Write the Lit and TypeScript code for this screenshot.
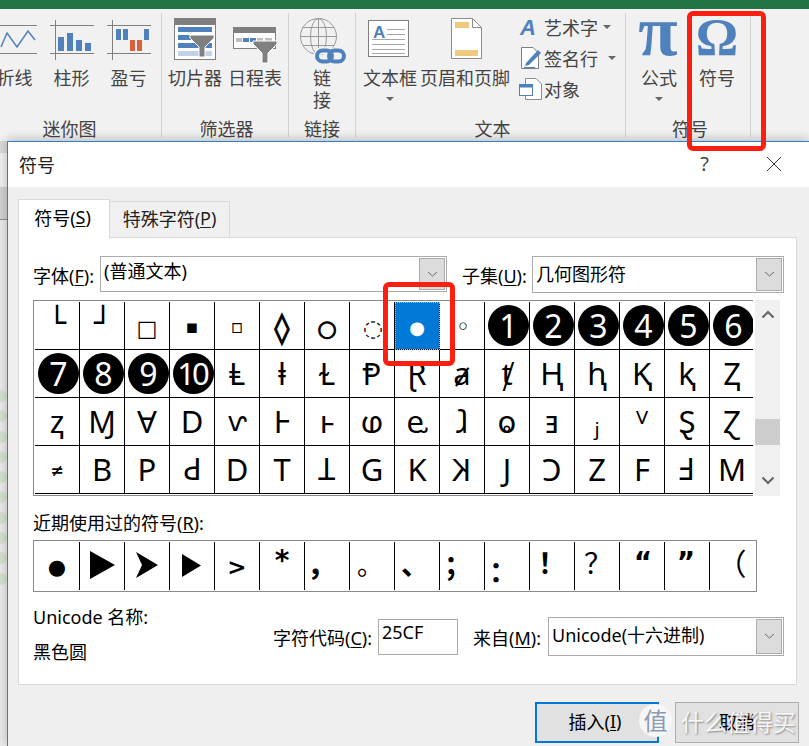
import { LitElement, html, css, svg } from "lit";
import { customElement } from "lit/decorators.js";

type G = { c: string; s?: number; x?: number; y?: number; r?: string; f?: string; w?: number; k?: number; p?: string; pw?: number; ph?: number };
const n = (c: string): G => ({ c, f: "num" });

const ROWS: G[][] = [
  [
    { c: "└", s: 30, x: 0, y: -3 }, { c: "┘", s: 30, x: 1, y: -3 }, { c: "□", s: 22, x: 0, y: 3 },
    { c: "▪", s: 19, x: 0, y: 1 }, { c: "▫", s: 19, x: 0, y: 1 }, { c: "◊", s: 30, x: 0, y: 2, k: 1.2 },
    { c: "○", s: 22, x: 0, y: 3, k: 1 }, { c: "◌", s: 23, x: 1, y: 3 }, { c: "●", s: 18, x: 0, y: 2, r: "white" },
    { c: "◦", s: 24, x: 1, y: 1 }, n("1"), n("2"), n("3"), n("4"), n("5"), n("6"),
  ],
  [
    n("7"), n("8"), n("9"), n("10"), { c: "Ⱡ" }, { c: "ⱡ" }, { c: "Ɫ" }, { c: "Ᵽ" }, { c: "Ɽ" }, { c: "ⱥ" },
    { c: "ⱦ" }, { c: "Ⱨ" }, { c: "ⱨ" }, { c: "Ⱪ" }, { c: "ⱪ" }, { c: "Ⱬ" },
  ],
  [
    { c: "ⱬ" }, { c: "Ɱ" }, { c: "Ɐ" }, { c: "D" }, { c: "ⱱ", s: 26 }, { c: "Ⱶ" }, { c: "ⱶ" }, { c: "ⱷ" },
    { c: "ⱸ" }, { c: "ⱹ" }, { c: "ⱺ" }, { c: "ⱻ" }, { c: "ⱼ" }, { c: "ⱽ" }, { c: "Ȿ" }, { c: "Ɀ" },
  ],
  [
    { c: "≠", s: 16, y: 1, w: 700 }, { c: "B" }, { c: "P" }, { c: "P", r: "rot" }, { c: "D" }, { c: "T" }, { c: "T", r: "rot" }, { c: "G" },
    { c: "K" }, { c: "K", r: "flip" }, { c: "J" }, { c: "C", r: "flip" }, { c: "Z" }, { c: "F" }, { c: "F", r: "rot" }, { c: "M" },
  ],
];

const RECENT: G[] = [
  { c: "●", s: 21, x: 0, y: 1 },
  { c: "▶", p: "M0 0L25 14L0 28Z", pw: 25, ph: 28, y: -1 },
  { c: "➤", p: "M0 0L22 13L0 26L6 13Z", pw: 22, ph: 26, y: -1 },
  { c: "▶", p: "M0 0L19 11.500L0 23Z", pw: 19, ph: 23, x: -1, y: -1 },
  { c: ">", s: 23, x: 0, y: 1, w: 700 }, { c: "*", s: 28, x: 0, y: -5, w: 700 }, { c: "，", s: 30, x: -5, y: -1, w: 700 }, { c: "。", s: 26, x: -2, y: 0 },
  { c: "、", s: 28, x: -2, y: 0, w: 700 }, { c: "；", s: 28, x: -4, y: 1, w: 700 }, { c: "：", s: 28, x: -4, y: 7, w: 700 }, { c: "！", s: 28, x: 0, y: -1, w: 700 },
  { c: "？", s: 28, x: 1, y: -1 }, { c: "“", s: 28, x: 1, y: -3, w: 700 }, { c: "”", s: 28, x: -1, y: -3, w: 700 }, { c: "（", s: 30, x: -1, y: -1 },
];

const LINE = "#808080";
const BLUE = "#4f81bd";

const frame = svg`<path d="M8 9.500H52M8 37.500H52M13.500 4V44" stroke="${LINE}" fill="none"/>`;
const funnel = (x: number, y: number) => svg`<path transform="translate(${x} ${y})" d="M0 0H24V3L15 12V22H9V12L0 3Z" fill="#7f7f7f" stroke="#fff" stroke-width="1"/>`;

const ICONS: Record<string, unknown> = {
  line: svg`${frame}<polyline points="16,31 22,17 32,31 43,15 50,24" fill="none" stroke="${BLUE}" stroke-width="1.500"/>`,
  col: svg`${frame}<g fill="${BLUE}"><rect x="16" y="21" width="6" height="14"/><rect x="25" y="17" width="6" height="18"/><rect x="34" y="24" width="6" height="11"/><rect x="43" y="27" width="6" height="8"/></g>`,
  wl: svg`${frame}<g fill="${BLUE}"><rect x="17" y="13" width="5" height="11"/><rect x="24" y="13" width="5" height="11"/><rect x="45" y="13" width="5" height="11"/></g><g fill="#d9603b"><rect x="31" y="24" width="5" height="11"/><rect x="38" y="24" width="5" height="11"/></g>`,
  slicer: svg`<rect x="9.500" y="2.500" width="41" height="41" fill="#fff" stroke="#7f7f7f"/><rect x="9" y="2" width="42" height="7" fill="#7f7f7f"/><g fill="${BLUE}"><rect x="13" y="11" width="34" height="5"/><rect x="13" y="19" width="34" height="5"/><rect x="13" y="27" width="34" height="5"/></g><rect x="13" y="35" width="34" height="5" fill="#c0d3e8"/>${funnel(25, 19)}`,
  timeline: svg`<rect x="8.500" y="11.500" width="42" height="21" fill="#fff" stroke="#7f7f7f"/><rect x="8" y="11" width="43" height="6" fill="#7f7f7f"/><rect x="11" y="22" width="6" height="4" fill="#bdbdbd"/><rect x="18" y="22" width="6" height="4" fill="${BLUE}"/><rect x="25" y="22" width="6" height="4" fill="${BLUE}"/><rect x="32" y="22" width="6" height="4" fill="#bdbdbd"/><rect x="40" y="22" width="7" height="4" fill="#bdbdbd"/>${funnel(28, 25)}`,
  link: svg`<g fill="none" stroke="#9a9a9a"><circle cx="26.500" cy="20.500" r="18"/><ellipse cx="26.500" cy="20.500" rx="8" ry="18"/><path d="M26.500 2.500V38.500M8.500 20.500H44.500M11 11.500H42M11 29.500H42"/></g><g fill="none"><rect x="25" y="34.500" width="15" height="11" rx="5.500" stroke="#f1f1f1" stroke-width="7"/><rect x="37" y="34.500" width="15" height="11" rx="5.500" stroke="#f1f1f1" stroke-width="7"/><rect x="25" y="34.500" width="15" height="11" rx="5.500" stroke="${BLUE}" stroke-width="4"/><rect x="37" y="34.500" width="15" height="11" rx="5.500" stroke="${BLUE}" stroke-width="4"/></g>`,
  textbox: svg`<rect x="8.500" y="4.500" width="40" height="36" fill="#fff" stroke="#7f7f7f"/><text x="13" y="22" font-family="Liberation Sans" font-weight="700" font-size="17" fill="${BLUE}">A</text><path d="M27 13.500H45M27 18.500H45M12 23.500H45M12 28.500H45M12 33.500H45M12 37.500H45" stroke="#a6a6a6"/>`,
  hf: svg`<path d="M16.500 2.500H37.500L46.500 11.500V42.500H16.500Z" fill="#fff" stroke="#8c8c8c"/><path d="M37.500 2.500V11.500H46.500" fill="none" stroke="#8c8c8c"/><rect x="20" y="6" width="14" height="6" fill="#f0c97f"/><rect x="20" y="34" width="23" height="6" fill="#f0c97f"/>`,
  pi: svg`<text x="29" y="39" text-anchor="middle" font-family="Liberation Serif" font-weight="700" font-size="72" fill="${BLUE}">π</text>`,
  omega: svg`<text x="30" y="39" text-anchor="middle" font-family="Liberation Serif" font-weight="700" font-size="53" fill="${BLUE}">Ω</text>`,
};

const art = html`<svg width="22" height="22" viewBox="0 0 22 22"><text x="0" y="19" font-family="Liberation Sans" font-style="italic" font-weight="700" font-size="22" fill="${BLUE}">A</text></svg>`;
const sign = html`<svg width="22" height="24" viewBox="0 0 22 24"><path d="M1.500 1.500H13L18.500 7V22.500H1.500Z" fill="#fff" stroke="#7f7f7f"/><path d="M6 17L18 4L21 7L9 19L5 20Z" fill="${BLUE}"/><path d="M4 21.500H15" stroke="${BLUE}"/></svg>`;
const obj = html`<svg width="24" height="24" viewBox="0 0 24 24"><path d="M6.500 1.500H17L22.500 7V22.500H6.500Z" fill="#fff" stroke="#8c8c8c"/><rect x="0.500" y="7.500" width="13" height="11" fill="#fff" stroke="${BLUE}"/><rect x="0.500" y="7.500" width="13" height="3" fill="${BLUE}"/></svg>`;
const chev = html`<svg width="11" height="7" viewBox="0 0 11 7"><path d="M1 1L5.500 5L10 1" fill="none" stroke="#6a6a6a"/></svg>`;

@customElement("app-root")
export class AppRoot extends LitElement {
  static styles = css`
    :host { display: block; width: 809px; height: 746px; position: relative; overflow: hidden; background: #f1f1f1;
      font-family: "Noto Sans", "Noto Sans CJK SC", sans-serif; color: #000; }
    u { text-decoration-thickness: 1px; text-underline-offset: 2px; }
    .green { height: 9px; background: #217346; }
    .ribbon { display: flex; height: 132px; color: #444; font-size: 18px; }
    .group { display: flex; flex-direction: column; flex: none; }
    .items { display: flex; height: 109px; padding-top: 8px; box-sizing: border-box; }
    .item svg { margin-top: -1px; }
    .label { height: 22px; line-height: 22px; text-align: center; white-space: nowrap; }
    .g1 { width: 175px; margin-left: -14px; } .g1 .label { padding-right: 8px; }
    .g2 { width: 126px; padding-left: 3px; box-sizing: border-box; }
    .g3 { width: 66px; }
    .g4 { width: 269px; padding-left: 4px; box-sizing: border-box; }
    .g5 { width: 124px; padding-left: 4px; box-sizing: border-box; }
    .sep { width: 1px; margin: 4px 0; background: #d2d2d2; flex: none; }
    .item { display: flex; flex-direction: column; align-items: center; flex: none; white-space: nowrap; }
    .item svg { flex: none; display: block; overflow: visible; }
    .cap { height: 22px; line-height: 22px; position: relative; top: 1px; }
    .tri { width: 0; height: 0; border: 4px solid transparent; border-top: 4px solid #666; border-bottom: 0; margin-top: 9px; }
    .small { display: flex; flex-direction: column; margin-left: 7px; margin-top: -6px; flex: none; }
    .srow { display: flex; align-items: center; height: 31px; }
    .srow .ic { width: 27px; display: flex; justify-content: center; }
    .srow .ic svg { overflow: visible; }
    .srow .tri { margin: 0 0 0 5px; }
    .srow .tri.w { margin-left: 10px; }

    .lower { display: flex; height: 605px; }
    .strip { width: 7px; flex: none; background: #e8e8e8; display: flex; flex-direction: column; }
    .strip .top { height: 79px; flex: none; background: linear-gradient(#d8d8d8 0 12px, #eee 12px 46px, #cfcfcf 46px 78px, #8f8f8f 78px); }
    .strip .blobs { margin-top: 170px; display: flex; flex-direction: column; gap: 8.300px; }
    .strip .blobs i { display: block; height: 12px; background: #d3e0cd; border-radius: 0 6px 6px 0; }
    .dialog { flex: 1; position: relative; z-index: 1; border-top: 1px solid #2b80d0; border-left: 1px solid #2b80d0; background: #efefef;
      box-shadow: 0 -2px 9px rgba(0,0,0,.22); box-sizing: border-box; font-size: 18px; }
    .title { height: 45px; background: #fff; display: flex; align-items: center; padding: 0 0 2px 11px; box-sizing: border-box; color: #222; }
    .title .sp { flex: 1; }
    .title .q { font-size: 20px; margin-right: 57px; color: #444; }
    .title svg { margin-right: 27px; }
    .tabs { display: flex; align-items: flex-end; height: 50px; margin-left: 10px; }
    .tab { box-sizing: border-box; border: 1px solid #d9d9d9; border-bottom: 0; display: flex; align-items: center; justify-content: center; padding-bottom: 4px; }
    .tab.on { width: 92px; height: 39px; background: #fff; margin-bottom: -1px; position: relative; z-index: 1; padding-right: 3px; }
    .tab.off { width: 121px; height: 36px; background: #f0f0f0; margin-left: -1px; color: #222; }
    .panel { margin-left: 10px; width: 779px; height: 448px; box-sizing: border-box; border: 1px solid #d9d9d9; background: #fff; padding: 18px 0 0 14px; }
    .r1 { display: flex; align-items: center; height: 37px; }
    .lb { white-space: nowrap; flex: none; }
    .w1 { width: 62px; } .w2 { width: 65px; margin-left: 15px; } .w3 { width: 100px; } .w4 { width: 70px; margin-left: 15px; }
    .combo { box-sizing: border-box; border: 1px solid #ababab; background: #fff; display: flex; padding-left: 3px; line-height: 28px; position: relative; flex: none; }
    .combo .txt { flex: 1; white-space: nowrap; }
    .combo .btn { width: 26px; margin: 1px; background: #dcdcdc; border: 1px solid #ababab; box-sizing: border-box; display: flex; align-items: center; justify-content: center; }
    .c1 { width: 347px; height: 36px; margin-left: 5px; align-self: flex-start; }
    .c2 { width: 252px; height: 37px; margin-left: 5px; }
    .c3 { width: 236px; height: 39px; margin-left: 5px; line-height: 34px; }
    .c2 .txt { line-height: 34px; }
    .c1 .txt { line-height: 28px; }
    .gridwrap { display: flex; margin-top: 7px; }
    .grid { width: 720px; height: 196px; box-sizing: border-box; overflow: hidden; border: 1px solid #8a8a8a; border-right: 0; padding: 1px 0 1px 1px; }
    .grow { display: flex; height: 48px; }
    .cell { width: 45px; height: 48px; box-sizing: border-box; flex: none; border-right: 1.500px solid #000; border-bottom: 1.500px solid #000;
      display: flex; align-items: center; justify-content: center; overflow: visible; font-family: "Noto Sans", "DejaVu Sans", sans-serif; font-size: 31px; line-height: 1; }
    .cell span { display: block; }
    .cell.sel { background: #0078d7; outline: 1px dotted #e8b060; outline-offset: -1px; color: #fff; }
    .rot { rotate: 180deg; }
    .flip { scale: -1 1; }
    .sym { font-family: "DejaVu Sans", "Noto Sans CJK SC", sans-serif; }
    .tg { display: block; flex: none; }
    .circle { width: 41px; height: 41px; flex: none; border-radius: 50%; background: #000; color: #fff; font-size: 32px; line-height: 41px; text-align: center; margin-left: 3px; }
    .circle.ten { font-size: 31px; letter-spacing: -3px; text-indent: -3px; }
    .scroll { width: 25px; height: 196px; margin-left: 2px; background: #f0f0f0; display: flex; flex-direction: column; align-items: center; justify-content: space-between; padding: 10px 0 11px; box-sizing: border-box; position: relative; }
    .thumb { position: absolute; left: 0; top: 119px; width: 100%; height: 26px; background: #cdcdcd; }
    .rl { height: 20px; line-height: 20px; margin-top: 17px; }
    .recent { display: flex; width: 724px; height: 52px; box-sizing: border-box; border: 1px solid #8a8a8a; padding: 1px; margin-top: 7px; }
    .recent .cell { border-bottom: 0; border-right: 1.500px solid #000; height: 48px; }
    .recent .cell:last-child { border-right: 0; }
    .bottom { display: flex; align-items: flex-start; margin-top: 15px; }
    .left { width: 240px; flex: none; display: flex; flex-direction: column; gap: 15px; line-height: 20px; }
    .right { display: flex; align-items: center; height: 39px; margin-top: 10px; }
    .input { width: 80px; height: 36px; box-sizing: border-box; border: 1px solid #ababab; margin-left: 5px; padding-left: 3px; line-height: 24px; flex: none; }
    .actions { display: flex; justify-content: flex-end; gap: 16px; margin-top: 17px; padding-right: 10px; }
    .b { width: 124px; height: 41px; box-sizing: border-box; background: #e1e1e1; border: 1px solid #adadad; display: flex; align-items: center; justify-content: center; padding-bottom: 4px; }
    .b.def { border: 2px solid #0078d7; padding-right: 4px; }
    .box { position: absolute; z-index: 3; box-sizing: border-box; border: 5px solid #fb1f11; border-radius: 6px; pointer-events: none; }
    .box.a { left: 687px; top: 11px; width: 79px; height: 140px; }
    .box.b2 { left: 383px; top: 282px; width: 72px; height: 84px; }
    .mark { position: absolute; z-index: 4; left: 639px; top: 704px; display: flex; align-items: center; gap: 9px; }
    .logo { width: 33px; height: 33px; border-radius: 50%; background: #f6f6f6; color: #8a9ab0; font-size: 24px; line-height: 32px; text-align: center; font-family: "Noto Sans CJK SC", sans-serif; }
    .wm { color: rgba(255,255,255,.88); font-size: 23px; line-height: 32px; text-shadow: 1px 1px 2px rgba(0,0,0,.4); font-family: "Noto Sans CJK SC", sans-serif; white-space: nowrap; }
  `;

  private item(w: number, icon: string, ...caps: string[]) {
    return html`<div class="item" style="width:${w}px"><svg width="60" height="50" viewBox="0 0 60 50">${ICONS[icon]}</svg>${caps.map((c) => html`<div class="cap">${c}</div>`)}</div>`;
  }

  private glyph(g: G, sel = false) {
    if (g.f === "num") {
      return html`<div class="cell"><div class="circle ${g.c === "10" ? "ten" : ""}">${g.c}</div></div>`;
    }
    const tr = `transform:translate(${g.x ?? 0}px,${g.y ?? 0}px)`;
    if (g.p) {
      return html`<div class="cell"><svg class="tg" role="img" aria-label=${g.c} width=${g.pw!} height=${g.ph!} viewBox="0 0 ${g.pw} ${g.ph}" style=${tr}><path d=${g.p} fill="#000"/></svg></div>`;
    }
    const st = `font-size:${g.s ?? 31}px;font-weight:${g.w ?? 400};-webkit-text-stroke:${g.k ?? 0}px currentColor;${tr}`;
    const cls = g.r === "rot" ? "rot" : g.r === "flip" ? "flip" : "";
    return html`<div class="cell ${sel ? "sel" : ""}"><span class=${cls + (g.s ? " sym" : "")} style=${st}>${g.c}</span></div>`;
  }

  render() {
    return html`
      <div class="green"></div>
      <div class="ribbon">
        <div class="group g1"><div class="items">${this.item(57, "line", "折线")}${this.item(57, "col", "柱形")}${this.item(57, "wl", "盈亏")}</div><div class="label">迷你图</div></div>
        <div class="sep"></div>
        <div class="group g2"><div class="items">${this.item(60, "slicer", "切片器")}${this.item(60, "timeline", "日程表")}</div><div class="label">筛选器</div></div>
        <div class="sep"></div>
        <div class="group g3"><div class="items">${this.item(66, "link", "链", "接")}</div><div class="label">链接</div></div>
        <div class="sep"></div>
        <div class="group g4"><div class="items">
          <div class="item" style="width:60px"><svg width="60" height="50" viewBox="0 0 60 50">${ICONS.textbox}</svg><div class="cap">文本框</div><div class="tri"></div></div>
          ${this.item(90, "hf", "页眉和页脚")}
          <div class="small">
            <div class="srow"><div class="ic">${art}</div><span>艺术字</span><div class="tri"></div></div>
            <div class="srow"><div class="ic">${sign}</div><span>签名行</span><div class="tri w"></div></div>
            <div class="srow"><div class="ic">${obj}</div><span>对象</span></div>
          </div>
        </div><div class="label">文本</div></div>
        <div class="sep"></div>
        <div class="group g5"><div class="items">
          <div class="item" style="width:58px"><svg width="60" height="50" viewBox="0 0 60 50">${ICONS.pi}</svg><div class="cap">公式</div><div class="tri"></div></div>
          ${this.item(58, "omega", "符号")}
        </div><div class="label">符号</div></div>
        <div class="sep"></div>
      </div>
      <div class="lower">
        <div class="strip"><div class="top"></div><div class="blobs">${Array.from({ length: 10 }, () => html`<i></i>`)}</div></div>
        <div class="dialog">
          <div class="title"><span>符号</span><span class="sp"></span><span class="q">?</span>
            <svg width="16" height="16" viewBox="0 0 16 16"><path d="M1 1L15 15M15 1L1 15" stroke="#333" fill="none"/></svg></div>
          <div class="tabs"><div class="tab on">符号(<u>S</u>)</div><div class="tab off">特殊字符(<u>P</u>)</div></div>
          <div class="panel">
            <div class="r1">
              <div class="lb w1">字体(<u>F</u>):</div>
              <div class="combo c1"><div class="txt">(普通文本)</div><div class="btn">${chev}</div></div>
              <div class="lb w2">子集(<u>U</u>):</div>
              <div class="combo c2"><div class="txt">几何图形符</div><div class="btn">${chev}</div></div>
            </div>
            <div class="gridwrap">
              <div class="grid">
                ${ROWS.map((row, i) => html`<div class="grow">${row.map((g, j) => this.glyph(g, i === 0 && j === 8))}</div>`)}
              </div>
              <div class="scroll">
                <svg width="14" height="9" viewBox="0 0 14 9"><path d="M1.500 7.500L7 2L12.500 7.500" fill="none" stroke="#666" stroke-width="2.200"/></svg>
                <div class="thumb"></div>
                <svg width="14" height="9" viewBox="0 0 14 9"><path d="M1.500 1.500L7 7L12.500 1.500" fill="none" stroke="#666" stroke-width="2.200"/></svg>
              </div>
            </div>
            <div class="rl">近期使用过的符号(<u>R</u>):</div>
            <div class="recent">${RECENT.map((g) => this.glyph(g))}</div>
            <div class="bottom">
              <div class="left"><div>Unicode 名称:</div><div>黑色圆</div></div>
              <div class="right">
                <div class="lb w3">字符代码(<u>C</u>):</div>
                <div class="input">25CF</div>
                <div class="lb w4">来自(<u>M</u>):</div>
                <div class="combo c3"><div class="txt">Unicode(十六进制)</div><div class="btn">${chev}</div></div>
              </div>
            </div>
          </div>
          <div class="actions"><div class="b def">插入(<u>I</u>)</div><div class="b">取消</div></div>
        </div>
      </div>
      <div class="box a"></div>
      <div class="box b2"></div>
      <div class="mark"><div class="logo">值</div><div class="wm">什么值得买</div></div>
    `;
  }
}
